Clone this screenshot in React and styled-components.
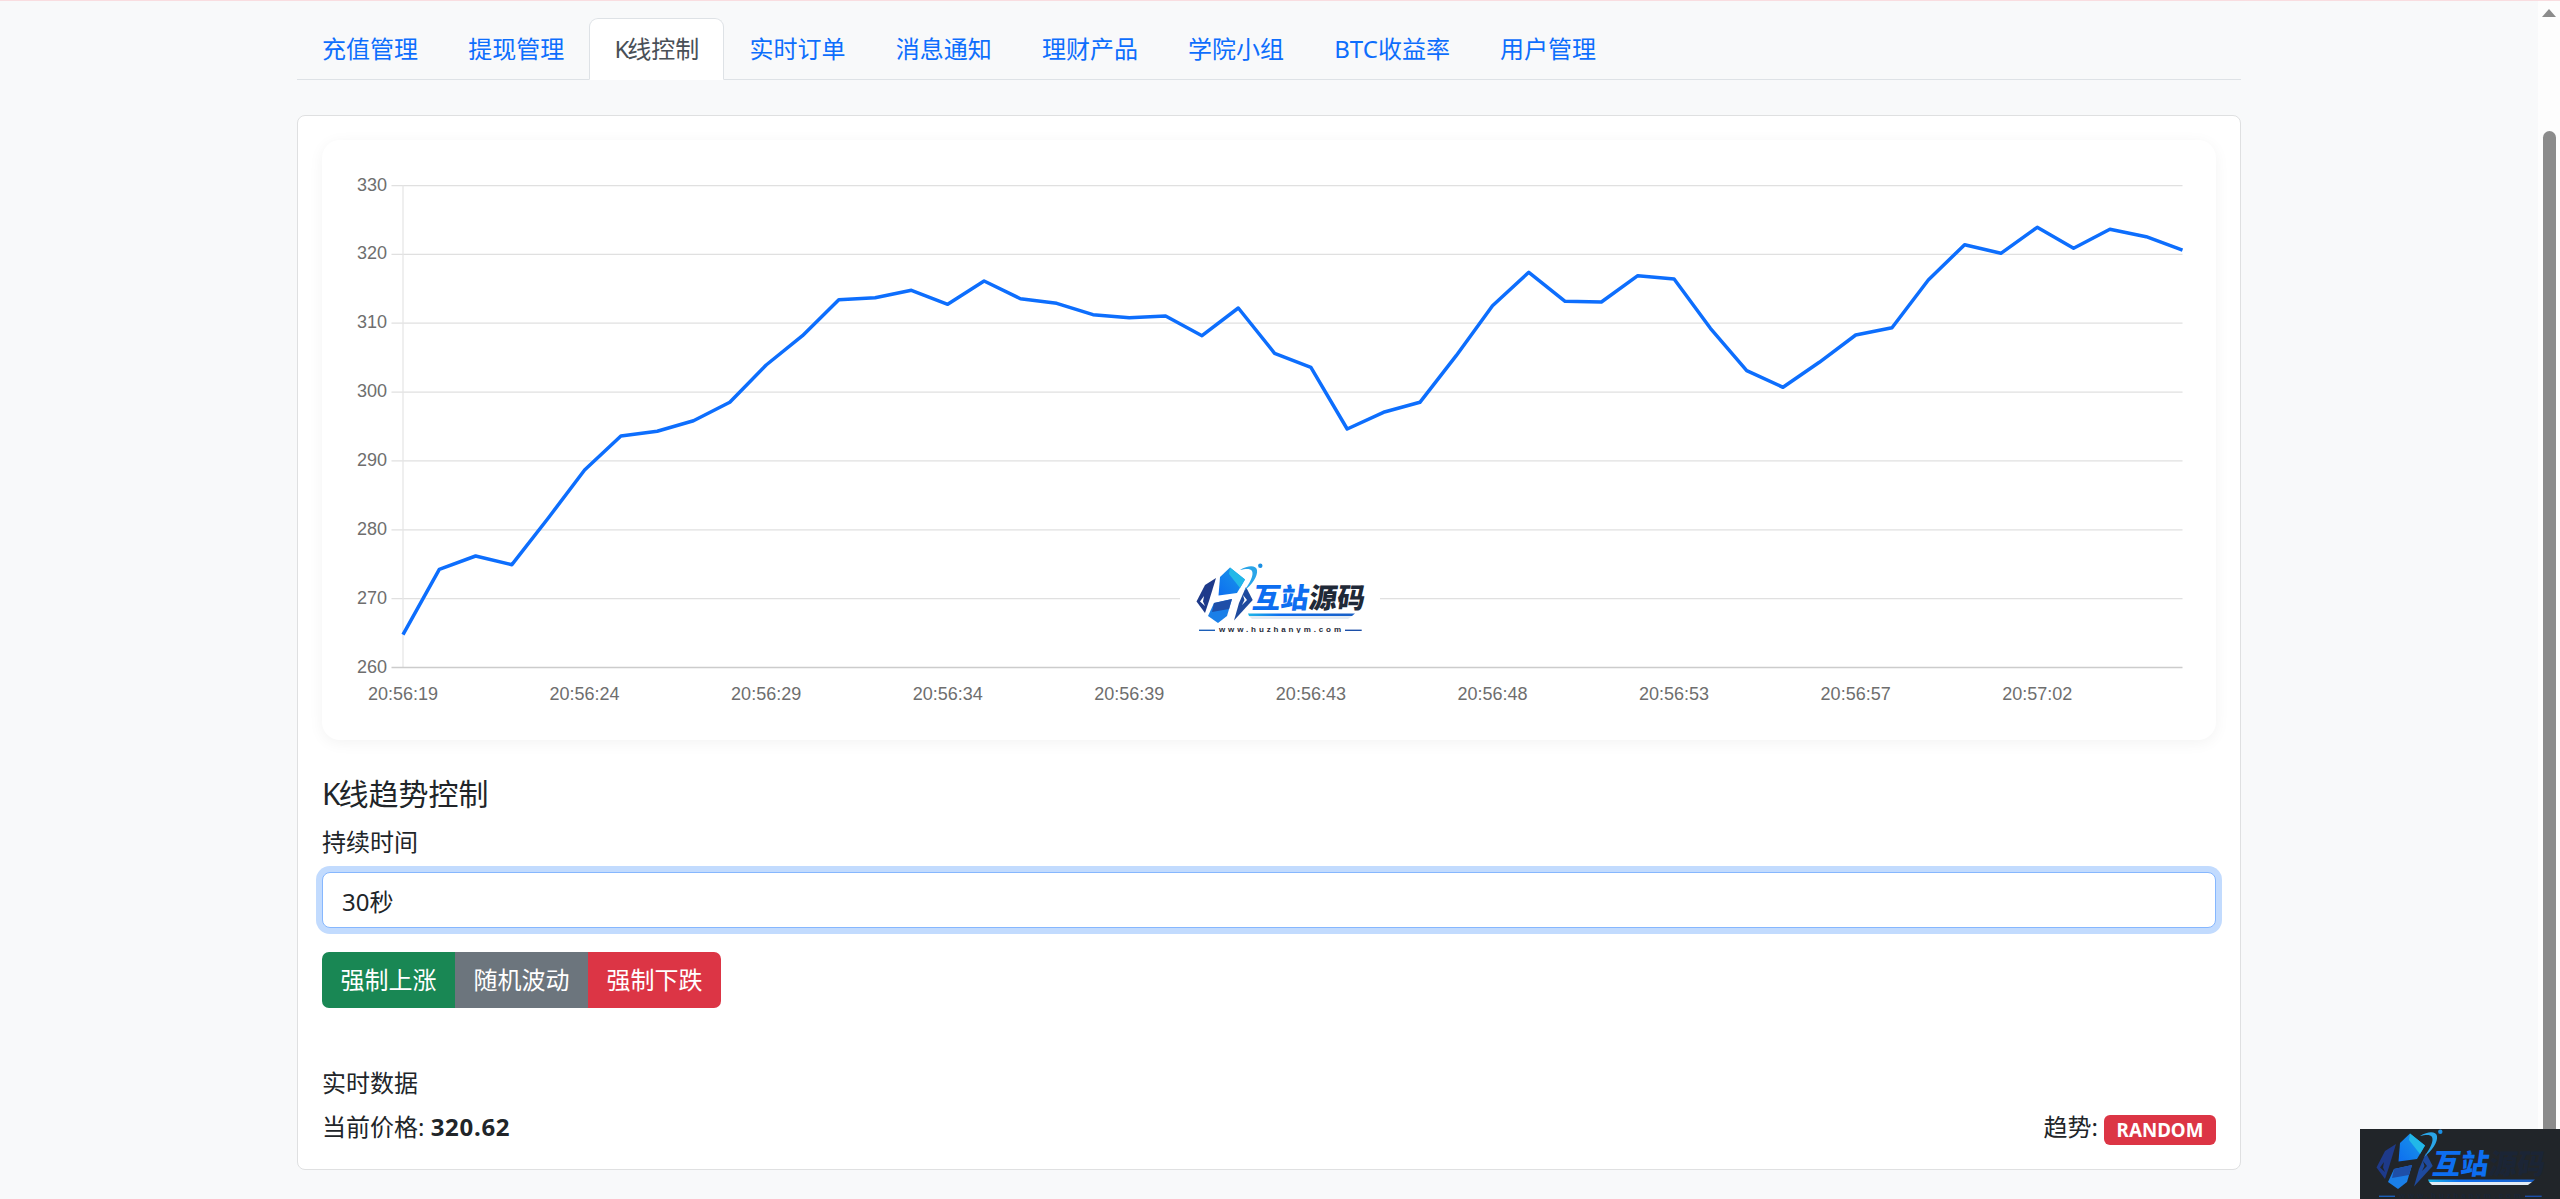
import React from 'react';
import styled, { createGlobalStyle } from 'styled-components';

const GlobalStyle = createGlobalStyle`
    html, body {
        margin: 0;
        height: 100%;
        background: #f8f9fa;
        color: #212529;
        overflow: hidden;
        font-family: "Noto Sans", "Noto Sans CJK SC", sans-serif;
        font-size: 24px;
        line-height: 36px;
    }
    * {
        box-sizing: border-box;
    }
`;

const Page = styled.div`
    display: flex;
    height: 1199px;
    border-top: 1px solid #f9dde0;
    overflow: hidden;
`;

const Main = styled.main`
    flex: 1;
    min-width: 0;
    padding-top: 17px;
`;

const Container = styled.div`
    width: 1944px;
    margin: 0 auto;
`;

const Scrollbar = styled.aside`
    width: 22px;
    background: #fdfdfd;
    display: flex;
    flex-direction: column;
    align-items: center;
`;

const ScrollArrow = styled.div`
    margin-top: 8px;
    width: 0;
    height: 0;
    border-left: 7.5px solid transparent;
    border-right: 7.5px solid transparent;
    border-bottom: 8px solid #8b8b8b;
`;

const ScrollThumb = styled.div`
    margin-top: 114px;
    width: 13px;
    flex: 1;
    border-radius: 6.5px 6.5px 0 0;
    background: #8b8b8b;
`;

const Tabs = styled.nav`
    display: flex;
    border-bottom: 1px solid #dee2e6;
`;

const Tab = styled.a`
    padding: 12px 24.1px;
    margin-bottom: -1px;
    border: 1px solid ${props => (props.$active ? '#dee2e6' : 'transparent')};
    border-bottom-color: ${props => (props.$active ? '#fff' : 'transparent')};
    border-radius: 9px 9px 0 0;
    background: ${props => (props.$active ? '#fff' : 'transparent')};
    color: ${props => (props.$active ? '#495057' : '#0d6efd')};
    white-space: nowrap;
`;

const NarrowK = styled.span`
    letter-spacing: -2px;
`;

const Card = styled.section`
    margin-top: 35px;
    padding: 24px;
    background: #fff;
    border: 1px solid #dfe0e1;
    border-radius: 8px;
`;

const ChartCard = styled.div`
    position: relative;
    height: 600px;
    margin-bottom: 36px;
    background: #fff;
    border-radius: 18px;
    box-shadow: 0 3px 15px rgba(0, 0, 0, 0.05);
`;

const ChartSvg = styled.svg`
    display: block;
    width: 100%;
    height: 100%;
`;

const AxisText = styled.text`
    font-family: "Liberation Sans", Arial, sans-serif;
    font-size: 18px;
    fill: #6e6e6e;
`;

const Watermark = styled.div`
    position: absolute;
    left: 858px;
    top: 423px;
    width: 200px;
    height: 70px;
    background: #fff;
`;

const CornerMark = styled.div`
    position: fixed;
    right: 0;
    bottom: 0;
    width: 200px;
    height: 70px;
    background: #212529;
`;

const LogoSvg = styled.svg`
    display: block;
    width: 200px;
    height: 70px;
`;

const LogoName = styled.text`
    font-family: "Noto Sans CJK SC", sans-serif;
    font-size: 28px;
    font-weight: 900;
`;

const LogoUrl = styled.text`
    font-family: "Liberation Sans", Arial, sans-serif;
    font-size: 8px;
    font-weight: 700;
`;

const Heading = styled.h5`
    margin: 0 0 12px;
    font-size: 30px;
    line-height: 36px;
    font-weight: 400;
`;

const FieldLabel = styled.label`
    display: block;
    margin-bottom: 12px;
`;

const Field = styled.input`
    display: block;
    width: 100%;
    height: 56px;
    margin-bottom: 24px;
    padding: 0 19px;
    font: inherit;
    color: #212529;
    background: #fff;
    border: 1px solid #86b7fe;
    border-radius: 8px;
    outline: 0;
    box-shadow: 0 0 0 6px #c2dbfe;
`;

const ButtonGroup = styled.div`
    display: inline-flex;
    vertical-align: top;
    border-radius: 7px;
    overflow: hidden;
`;

const Button = styled.button`
    height: 56px;
    padding: 0 18.5px;
    border: 0;
    font: inherit;
    color: #fff;
    background: ${props => props.$color};
`;

const SectionTitle = styled.div`
    margin-top: 57px;
    margin-bottom: 7.5px;
`;

const DataRow = styled.div`
    display: flex;
    justify-content: space-between;
    align-items: baseline;
`;

const Price = styled.strong`
    letter-spacing: 0.7px;
`;

const Badge = styled.span`
    display: inline-block;
    margin-left: 6px;
    width: 112px;
    height: 30px;
    vertical-align: -1.5px;
    text-align: center;
    font-size: 18.75px;
    line-height: 30px;
    font-weight: 700;
    color: #fff;
    background: #dc3545;
    border-radius: 6px;
`;

const tabItems = ['充值管理', '提现管理', 'K线控制', '实时订单', '消息通知', '理财产品', '学院小组', 'BTC收益率', '用户管理'];

const prices = [
    264.77, 274.26, 276.2, 274.93, 281.71, 288.68, 293.62, 294.3, 295.84, 298.52,
    303.93, 308.19, 313.42, 313.71, 314.78, 312.75, 316.13, 313.56, 312.89, 311.24,
    310.8, 311.05, 308.19, 312.21, 305.63, 303.6, 294.64, 297.06, 298.52, 305.28,
    312.54, 317.39, 313.18, 313.08, 316.9, 316.42, 309.26, 303.1, 300.69, 304.32,
    308.29, 309.35, 316.28, 321.4, 320.15, 323.93, 320.88, 323.64, 322.56, 320.62,
];

const timeLabels = ['20:56:19', '20:56:24', '20:56:29', '20:56:34', '20:56:39', '20:56:43', '20:56:48', '20:56:53', '20:56:57', '20:57:02'];

const plot = { left: 81, right: 1860.5, top: 45.5, bottom: 527.5 };
const stepX = (plot.right - plot.left) / (prices.length - 1);
const priceY = price => plot.top + ((330 - price) / 70) * (plot.bottom - plot.top);

function PriceChart() {
    const ticks = [330, 320, 310, 300, 290, 280, 270];
    const points = prices.map((p, i) => `${(plot.left + i * stepX).toFixed(1)},${priceY(p).toFixed(1)}`).join(' ');
    return (
        <ChartSvg viewBox="0 0 1894 600" preserveAspectRatio="none">
            {ticks.map(t => (
                <line key={t} x1={plot.left - 11.5} x2={plot.right} y1={priceY(t)} y2={priceY(t)} stroke="#e0e0e0" strokeWidth="1.25" />
            ))}
            <line x1={plot.left} x2={plot.left} y1={plot.top} y2={plot.bottom} stroke="#e6e6e6" strokeWidth="1.25" />
            <line x1={plot.left - 11.5} x2={plot.right} y1={plot.bottom} y2={plot.bottom} stroke="#ccc" strokeWidth="1.5" />
            {[...ticks, 260].map(t => (
                <AxisText key={t} x="65" y={priceY(t) - 1} textAnchor="end" dominantBaseline="central">{t}</AxisText>
            ))}
            {timeLabels.map((label, i) => (
                <AxisText key={label} x={plot.left + i * 5 * stepX} y="554" textAnchor="middle" dominantBaseline="central">{label}</AxisText>
            ))}
            <polyline points={points} fill="none" stroke="#0d6efd" strokeWidth="3.5" strokeLinejoin="round" />
        </ChartSvg>
    );
}

function Logo({ id }) {
    const dark = id === 'dark';
    const ink = dark ? '#1b2536' : '#1f2937';
    const knockout = dark ? '#212529' : '#fff';
    return (
        <LogoSvg viewBox="0 0 200 70">
            <defs>
                <linearGradient id={`${id}-top`} x1="0" y1="1" x2="1" y2="0">
                    <stop offset="0" stopColor="#0d6ef0" />
                    <stop offset="1" stopColor="#1a9be8" />
                </linearGradient>
                <linearGradient id={`${id}-bar`} x1="0" y1="0" x2="1" y2="0">
                    <stop offset="0" stopColor="#1fb6e6" />
                    <stop offset="0.3" stopColor="#0d6ef0" />
                    <stop offset="1" stopColor="#1a5fc4" />
                </linearGradient>
            </defs>
            <polygon points="40,14 50,4.5 65,16.5 57,30 38.5,32.5" fill={`url(#${id}-top)`} />
            <polygon points="50,4.5 65,16.5 60,25 49,11" fill="#22b8e8" />
            <polygon points="34,40 52,36 47,53 38,60 28,53" fill="#1a7fe8" />
            <polygon points="34,40 52,36 49,46 32,49" fill="#1e4fa8" />
            <polygon points="16.5,38.5 25,22 36,15 29,38 25,50" fill="#1e3a8a" />
            <polygon points="24,33 20,38.5 25,43 23,38.5" fill={knockout} />
            <polygon points="66,24 72.7,37 54,57.5 59,40" fill="#1e4a9e" />
            <polygon points="63,32 67,37 62,42 64.5,37" fill={knockout} />
            <path d="M60,7 C68,2 76,2 77,7 C78,13 72,22 64,28 C70,20 74,12 72,8 C70,5 65,6 60,7 Z" fill="#2aa5e8" />
            <circle cx="80.3" cy="2.8" r="2.2" fill="#1a8fe3" />
            <g transform="translate(10 0) skewX(-8)">
                <LogoName x="68" y="45.5" fill="#0d6ef0" textLength="56" lengthAdjust="spacingAndGlyphs">互站</LogoName>
                <LogoName x="124.5" y="45.5" fill={ink} textLength="56" lengthAdjust="spacingAndGlyphs">源码</LogoName>
            </g>
            <polygon points="68,50.5 175,50.5 172,53 69,53" fill={`url(#${id}-bar)`} />
            <polygon points="69,53 172,53 168,56 72,56" fill="#e3ebf3" />
            <rect x="19" y="66.6" width="16" height="1.4" fill="#1c5fb8" />
            <rect x="165" y="66.6" width="16.7" height="1.4" fill="#1c4fa8" />
            <LogoUrl x="39" y="68.5" fill={ink} textLength="122" lengthAdjust="spacing">www.huzhanym.com</LogoUrl>
        </LogoSvg>
    );
}

const TabLabel = ({ text }) => (text[0] === 'K' ? <><NarrowK>K</NarrowK>{text.slice(1)}</> : text);

export default function App() {
    return (
        <>
            <GlobalStyle />
            <Page>
                <Main>
                    <Container>
                        <Tabs>
                            {tabItems.map(item => (
                                <Tab key={item} $active={item === 'K线控制'}><TabLabel text={item} /></Tab>
                            ))}
                        </Tabs>
                        <Card>
                            <ChartCard>
                                <PriceChart />
                                <Watermark><Logo id="light" /></Watermark>
                            </ChartCard>
                            <Heading><NarrowK>K</NarrowK>线趋势控制</Heading>
                            <FieldLabel>持续时间</FieldLabel>
                            <Field readOnly value="30秒" />
                            <ButtonGroup>
                                <Button $color="#198754">强制上涨</Button>
                                <Button $color="#6c757d">随机波动</Button>
                                <Button $color="#dc3545">强制下跌</Button>
                            </ButtonGroup>
                            <SectionTitle>实时数据</SectionTitle>
                            <DataRow>
                                <span>当前价格: <Price>{prices[prices.length - 1].toFixed(2)}</Price></span>
                                <span>趋势:<Badge>RANDOM</Badge></span>
                            </DataRow>
                        </Card>
                    </Container>
                </Main>
                <Scrollbar>
                    <ScrollArrow />
                    <ScrollThumb />
                </Scrollbar>
            </Page>
            <CornerMark><Logo id="dark" /></CornerMark>
        </>
    );
}
